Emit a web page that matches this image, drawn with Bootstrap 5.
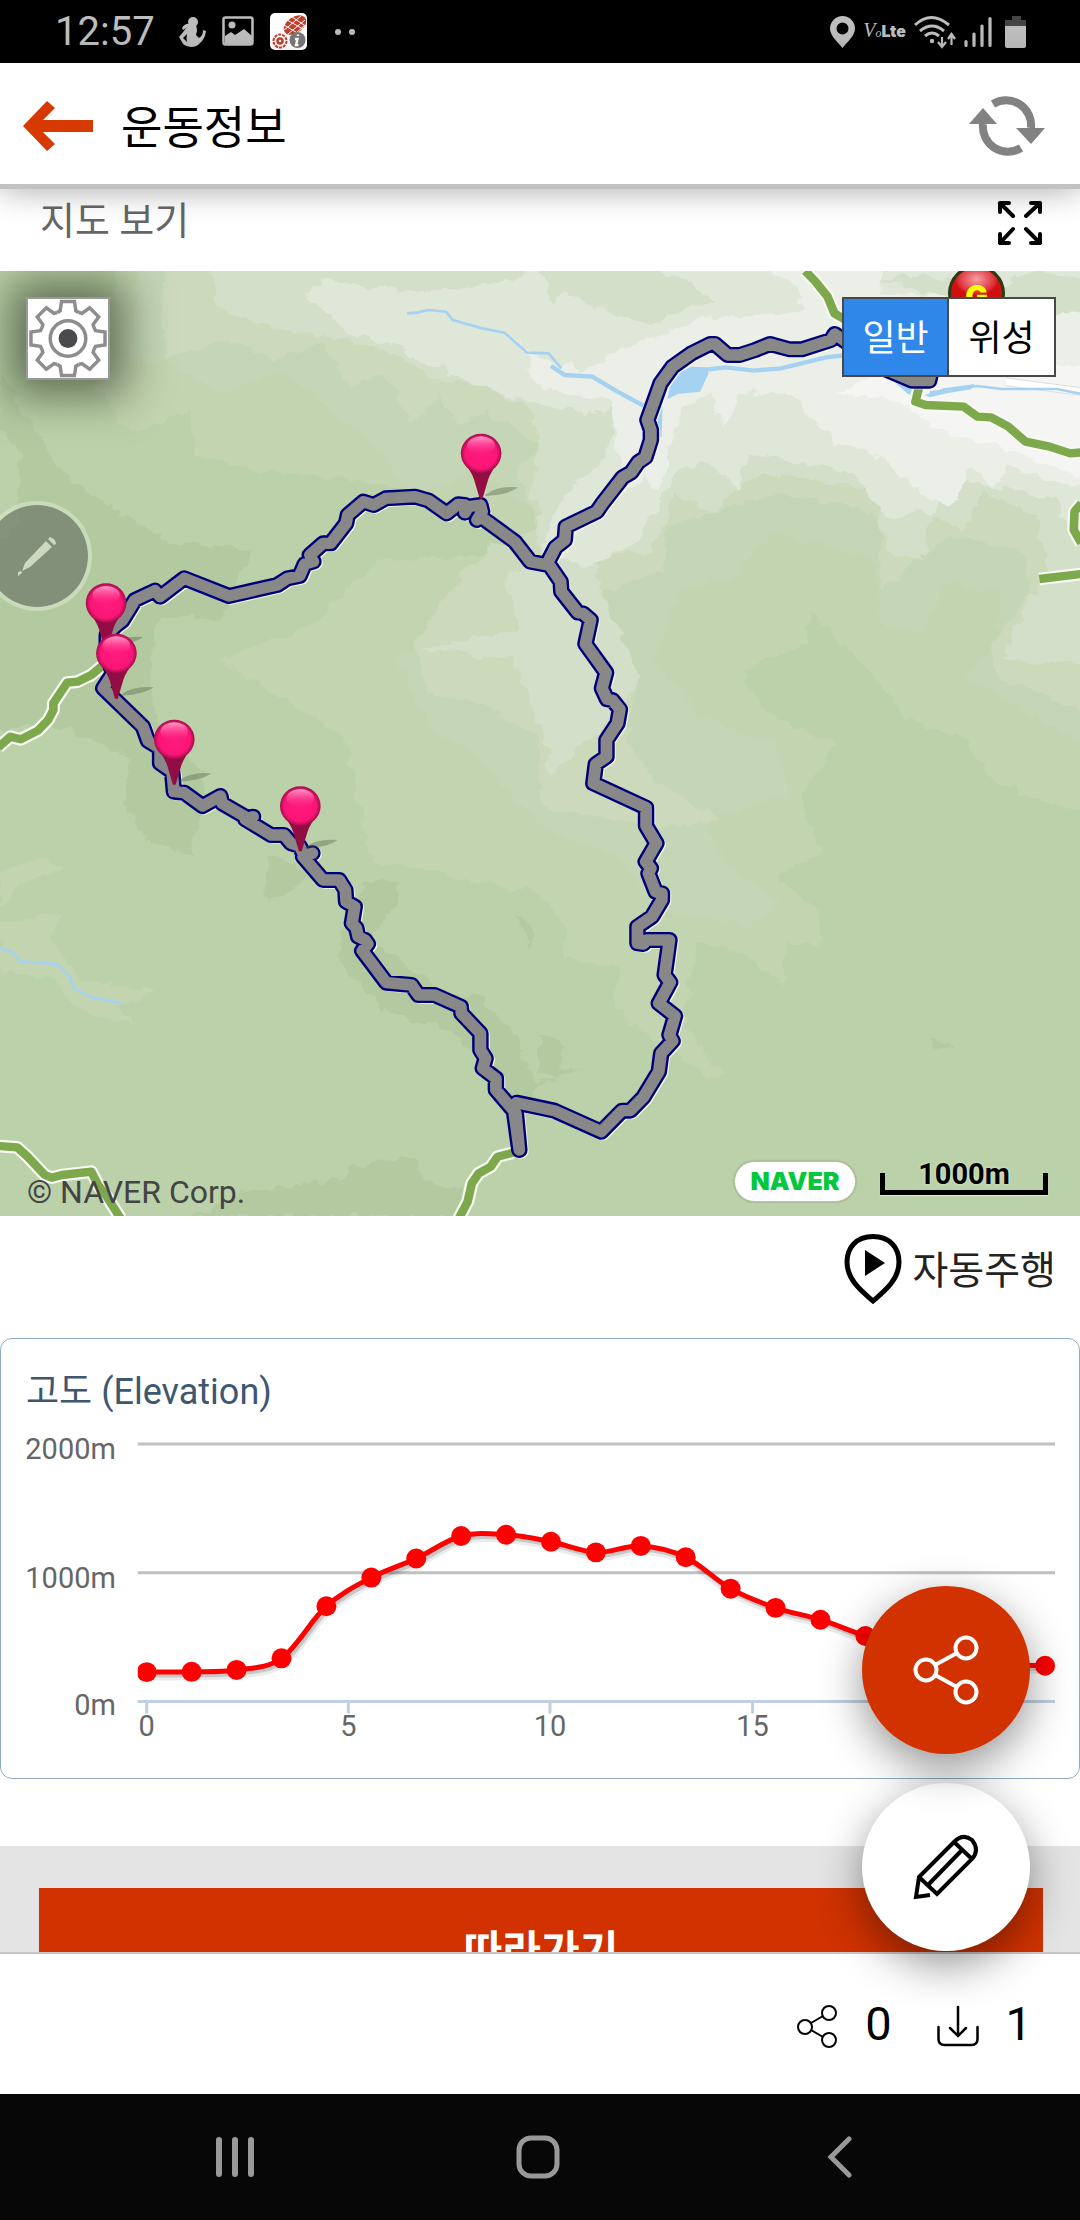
<!DOCTYPE html>
<html lang="ko">
<head>
<meta charset="utf-8">
<meta name="viewport" content="width=device-width, initial-scale=1">
<title>운동정보</title>
<link href="https://cdn.jsdelivr.net/npm/bootstrap@5.3.0/dist/css/bootstrap.min.css" rel="stylesheet">
<style>
  body { font-family: Roboto, "Noto Sans CJK KR", sans-serif; color: #000; background: #fff; }
  svg { display: block; flex: none; }
  .app-shell { height: 100vh; }
  .status-bar { height: 63px; padding: 0 52px 0 55px; background: #000; color: #bdbdbd; }
  .status-time { font-size: 40px; line-height: 40px; }
  .volte-mark { font: italic 20px/32px "Liberation Serif", serif; }
  .volte-mark small { font-size: 12px; }
  .volte-mark b { font: 900 16px/32px Inter, sans-serif; }
  .top-bar { height: 126px; padding: 4px 34px 0 22px; background: #fff; border-bottom: 5px solid #c2c2c2; box-shadow: 0 2px 30px rgba(0,0,0,.32); z-index: 5; }
  .top-title { font-size: 45px; line-height: 60px; margin-left: 27px; padding-top: 6px; }
  .plain-btn { padding: 0; border: 0; background: none; color: inherit; }
  .scroll-area { overflow-y: auto; scrollbar-width: none; }
  .map-head { height: 82px; padding: 0 37px 18px 40px; color: #666; font-size: 38px; line-height: 50px; }
  .map-head h2 { font-size: inherit; line-height: inherit; }
  .map-view { height: 945px; overflow: hidden; background: #bbd1a9; }
  .map-view > svg { width: 100%; height: 100%; }
  .gear-btn { left: 26px; top: 26px; width: 84px; height: 83px; background: #fff; border: 2px solid #999; box-shadow: 0 0 44px 16px rgba(20,30,10,.55); }
  .draw-btn { left: -18px; top: 230px; width: 110px; height: 110px; border-radius: 50%; background: rgba(90,97,90,.55); background-clip: padding-box; border: 4px solid rgba(225,235,215,.5); }
  .goal-ball { right: 75px; top: -6px; width: 57px; height: 57px; border-radius: 50%; border: 3px solid #2a3a12; background: radial-gradient(ellipse 22px 16px at 50% 22%, #f3a0a4, #e0353c 80%, transparent), #cf1010; color: #ff0; font: 900 30px/56px Inter, sans-serif; text-align: center; }
  .kind-group { right: 24px; top: 26px; height: 80px; border: 2px solid #484848; background: #fff; font-size: 36px; line-height: 50px; }
  .kind-group button { width: 105px; padding-top: 4px; }
  .kind-on { background: #2f87ea; color: #fff; border-right: 2px solid #484848; }
  .map-foot { left: 27px; right: 32px; bottom: 7px; height: 56px; color: #444; font-size: 32px; line-height: 34px; }
  .naver-pill { width: 122px; height: 41px; margin-bottom: 7px; border-radius: 21px; background: #fff; border: 1px solid #b4c3a6; box-shadow: 0 0 2px rgba(0,0,0,.3); color: #03c73c; font: 900 25px/39px Inter, sans-serif; }
  .scale-bar { width: 168px; margin-bottom: 14px; color: #000; font-weight: 700; font-size: 29px; line-height: 28px; text-shadow: 0 0 3px #e6efdc; }
  .scale-line { height: 22px; margin-top: -15px; border: 5px solid #000; border-top: 0; box-shadow: 0 1px 1px #dce8d0; }
  .drive-row { height: 122px; padding: 0 24px 12px; font-size: 39px; line-height: 54px; color: #222; }
  .elev-card { height: 441px; border: 1px solid #8facc6; border-radius: 12px; padding-top: 28px; }
  .elev-title { font-size: 36px; line-height: 50px; color: #3e576f; padding-left: 25px; }
  .elev-card > svg { width: 100%; height: auto; }
  .axis-text { font: 29px Roboto, sans-serif; fill: #666; }
  .follow-area { margin-top: 67px; padding: 42px 37px 60px 39px; background: #e4e4e4; }
  .follow-btn { height: 128px; border: 0; border-radius: 0; background: #d13200; color: #fff; font-size: 42px; font-weight: 700; line-height: 60px; }
  .fab-stack { right: 50px; bottom: 1px; gap: 29px; }
  .fab-round { width: 168px; height: 168px; border-radius: 50%; background: #fff; box-shadow: 0 14px 44px rgba(0,0,0,.42); }
  .fab-main { background: #d13200; z-index: 1; }
  .count-bar { height: 142px; padding: 0 48px; gap: 45px; border-top: 2px solid #c8c8c8; font-size: 47px; line-height: 50px; }
  .count-item { gap: 27px; }
  .nav-keys { height: 126px; padding: 0 220px 0 215px; background: #070707; }
</style>
</head>
<body>
<div class="app-shell d-flex flex-column">

  <div class="status-bar d-flex align-items-center flex-shrink-0">
    <span class="status-time">12:57</span>
    <svg class="ms-4" width="27" height="31" viewBox="0 0 27 31" fill="#bdbdbd"><circle cx="14" cy="6" r="5"/><path d="M11 9h6q1 3 1 6l-1 4 3 3q4-2 4-8l3 1q-1 8-6 12-3 4-9 4-8-1-9-5l-3-5 5-6q2-4 6-6zm-3 9l-4 4 4 4q-1-4 0-8z" fill-rule="evenodd"/><path d="M3 12q3-5 8-4v3q-4 0-7 3z"/></svg>
    <svg class="ms-3" width="32" height="31" viewBox="0 0 32 31"><rect x="1.500" y="1.500" width="29" height="27" rx="2" fill="none" stroke="#bdbdbd" stroke-width="2.500"/><circle cx="10" cy="9" r="3.500" fill="#bdbdbd"/><path d="M3 20l6-4 4 3 9-6 8 7v8H3z" fill="#bdbdbd"/></svg>
    <svg class="ms-3" width="37" height="37" viewBox="0 0 37 37"><rect width="37" height="37" rx="5" fill="#fff"/><ellipse cx="25" cy="12" rx="12.500" ry="8" transform="rotate(-35 25 12)" fill="#c43e2c"/><path d="M14 12l15 9M17 7l16 9M22 4l12 8M13 18L31 3M18 21L35 7M25 21l10-9" stroke="#fff" stroke-width="1"/><circle cx="10" cy="28" r="6.500" fill="none" stroke="#c43e2c" stroke-width="2" stroke-dasharray="3 1"/><circle cx="10" cy="28" r="2.500" fill="none" stroke="#c43e2c" stroke-width="2.500"/><circle cx="27.500" cy="27" r="8" fill="#777"/><path d="M28 21.500v1.500M25 26h2.500l-1.500 6h2.500" stroke="#fff" stroke-width="2.400" fill="none"/></svg>
    <svg class="ms-4" width="32" height="8" viewBox="0 0 32 8" fill="#bdbdbd"><circle cx="7" cy="4" r="3"/><circle cx="21" cy="4" r="3"/></svg>
    <div class="d-flex align-items-center ms-auto">
      <svg width="25" height="32" viewBox="0 0 25 32"><path fill="#bdbdbd" fill-rule="evenodd" d="M12.500 0A12.500 12.500 0 0 0 0 12.500C0 20 8 26 12.500 32 17 26 25 20 25 12.500A12.500 12.500 0 0 0 12.500 0zm0 6.500a6 6 0 1 1 0 12 6 6 0 0 1 0-12z"/></svg>
      <span class="volte-mark ms-2">V<small>o</small><b>Lte</b></span>
      <svg class="ms-2" width="42" height="34" viewBox="0 0 42 34" fill="none" stroke="#bdbdbd" stroke-width="3"><path d="M1 10q16-15 34 0M6 16q12-10 24 0M11 21q7-6 14 0"/><circle cx="18" cy="26" r="2.200" fill="#bdbdbd" stroke="none"/><path stroke-width="2.200" d="M28 22v9M24 27l4 5 4-5M37.500 30v-10M34 24l3.500-5 3.500 5"/></svg>
      <svg class="ms-2" width="28" height="32" viewBox="0 0 28 32" stroke="#bdbdbd" stroke-width="3.200" stroke-linecap="round"><path d="M2 25.500v4M10 18v11.500M18 10v19.500M26 2.500v27"/></svg>
      <svg class="ms-2" width="28" height="34" viewBox="0 0 28 34"><path fill="#444" d="M12 1h9v4h5v6H5V5h7z"/><path fill="#bdbdbd" d="M5 11h21v20q0 2-2 2H7q-2 0-2-2z"/></svg>
    </div>
  </div>

  <header class="top-bar d-flex align-items-center flex-shrink-0 position-relative">
    <button class="plain-btn" aria-label="뒤로"><svg width="72" height="52" viewBox="0 0 72 52"><path fill="#d63a00" d="M1 26L25 1l8 7-12 12h50v12H21l12 12-8 7z"/></svg></button>
    <h1 class="top-title fw-normal mb-0">운동정보</h1>
    <button class="plain-btn ms-auto" aria-label="새로고침"><svg width="78" height="62" viewBox="0 0 78 62"><path d="M25 9A25 25 0 0 1 63 33M53 53A25 25 0 0 1 15 29" fill="none" stroke="#828282" stroke-width="8"/><path fill="#828282" d="M48 33h29L63 49zM1 29L15 13l14 16z"/></svg></button>
  </header>

  <div class="position-relative flex-grow-1 d-flex flex-column" style="min-height:0">
    <main class="scroll-area flex-grow-1">
      <div class="map-head d-flex align-items-center justify-content-between">
        <h2 class="fw-normal mb-0">지도 보기</h2>
        <button class="plain-btn mt-1" aria-label="전체 화면"><svg width="46" height="46" viewBox="0 0 46 46" fill="none" stroke="#000" stroke-width="4" stroke-linecap="round" stroke-linejoin="round"><path d="M3 12V3h9M3 3l13 13M34 3h9v9M43 3L29 16M3 34v9h9M3 43l13-14M34 43h9v-9M43 43L29 29"/></svg></button>
      </div>

      <section class="map-view position-relative" aria-label="경로 지도">
        <svg viewBox="0 33 3136 2835" preserveAspectRatio="none">
          <defs>
            <filter id="rough" x="0" y="0" width="100%" height="100%"><feTurbulence type="fractalNoise" baseFrequency=".022" numOctaves="3" seed="4"/><feDisplacementMap in="SourceGraphic" scale="44" xChannelSelector="R" yChannelSelector="G"/></filter>
            <radialGradient id="ball" cx=".5" cy=".5" r=".5"><stop offset="0" stop-color="#ff1a80"/><stop offset=".78" stop-color="#fb1576"/><stop offset="1" stop-color="#a50d4c"/></radialGradient>
            <linearGradient id="shine" x1="0" y1="0" x2="0" y2="1"><stop offset="0" stop-color="#ff9cc8"/><stop offset="1" stop-color="#ff2a88" stop-opacity="0"/></linearGradient>
            <g id="pin"><path d="M12-8Q50-36 108-30Q84-10 14-4z" fill="#45553a" opacity=".35"/><path d="M-50-104Q-28-78-20-52L-4 4L4 4L20-52Q28-78 50-104z" fill="#930d45"/><circle cy="-132" r="59" fill="url(#ball)"/><ellipse cy="-155" rx="40" ry="28" fill="url(#shine)"/></g>
            <path id="route" d="M2575 330L2648 362L2698 362L2705 330M2460 248L2424 222L2413 240L2328 268L2293 268L2236 252L2193 270L2148 285L2113 285L2076 252L2062 252L2008 280L1953 320L1918 370L1880 480L1890 510L1890 540L1874 592L1853 607L1833 637L1808 652L1748 732L1733 755L1643 800L1640 840L1613 862L1590 908L1628 965L1630 995L1678 1058L1693 1060L1715 1080L1700 1152L1760 1238L1748 1285L1763 1318L1778 1320L1800 1348L1793 1390L1761 1440V1490L1730 1512L1723 1570L1876 1643V1698L1906 1750L1875 1805L1890 1825L1883 1840L1904 1896L1922 1900V1920L1893 1970L1851 2000V2050L1868 2052L1878 2040H1944L1930 2145L1946 2167L1913 2230L1960 2268L1944 2325L1953 2343L1920 2380L1913 2435L1868 2512L1830 2552H1806L1746 2615L1610 2552L1500 2528L1492 2550L1508 2670L1498 2560L1440 2490V2455L1402 2425L1410 2395L1395 2370V2320L1340 2260L1338 2240L1262 2205H1215L1195 2175L1122 2168L1052 2072L1068 2052L1060 2040L1040 2030L1035 2005L1022 1990L1030 1940L1005 1925L1003 1890L985 1860H938L880 1790L907 1780L882 1785L870 1758L845 1750L825 1725H787L712 1678L735 1670L720 1675L645 1630L640 1608L588 1638L535 1598L505 1595L500 1535L465 1510V1465L430 1443L415 1400L300 1285L328 1240L310 1180V1125L335 1098L355 1082L392 1020L450 992L465 1010L535 955L665 1008L805 975L835 955L870 948L885 912L910 905L900 885L938 850H960L1005 790L1010 765L1055 725L1085 735L1120 715L1205 710L1245 722L1297 760L1330 733L1350 735V758L1360 740L1395 735L1400 755L1385 780L1398 772L1495 845L1540 905L1590 915"/>
            <path id="roads" d="M2338 33L2368 65L2403 110L2423 160L2480 195M2668 385L2658 425L2688 435L2798 440L2838 470L2878 472L2928 500L2978 545L3048 560L3108 580L3140 577M3140 730L3120 755L3118 810L3140 850M3018 957L3140 942M300 1215L265 1245L225 1265L195 1268L155 1330V1350L140 1380L110 1412L60 1438L30 1430L-5 1462M-5 2658L50 2662L80 2690L130 2745L150 2753L180 2745L265 2735L285 2775L310 2810L350 2875M1490 2678L1445 2690L1425 2720L1390 2740L1370 2770L1358 2825L1330 2880"/>
          </defs>
          <g filter="url(#rough)">
            <path fill="#bbd1a9" d="M-100-60h3336v3000H-100z"/>
            <g fill="#b3caa1">
              <path d="M0 330L60 440L150 590L210 660L350 760L480 840L740 870L700 940L640 1080L460 1060L440 1180L430 1330L600 1560L560 1790L440 1750L360 1640L380 1500L290 1440L120 1390L0 1410L-60 900L50 780L60 600L0 500z"/>
              <path d="M560 2868L740 2790L980 2760L1030 2720L1200 2690L1240 2770L1360 2800L1350 2868zM1060 1860L1170 1870L1130 1960L1080 2040L1240 2160L1280 2210L1380 2200L1500 2330L1560 2470L1620 2440L1480 2560L1400 2400L1290 2300L1130 2260L980 2100L990 2050zM1568 2315L1640 2360L1620 2420L1700 2440L1568 2440z"/>
              <path d="M780 1780L900 1840L850 1900L770 1920zM2700 2335L2775 2360L2705 2370zM1500 1970L1550 2010L1545 2070zM1230 1590L1260 1630L1240 1640z"/>
            </g>
            <path fill="#c3d4b0" d="M360-40L280 380L380 520L560 450L555 590L800 640L1050 660L1300 720L1500 860L1380 880L1100 900L900 1100L640 1200L800 1300L1000 1440L1080 1800L1300 1850L1568 1900L1640 2000V2100L1800 2120L1790 2250L2050 2450L2100 2440L1990 2300L2000 2150L2020 2050L2130 2060L2280 2180V2050L2380 2060V1950L2250 1850L2380 1780L2330 1600L2430 1450L2250 1380L2150 1240L2340 1150L2350 1050L2500 1200L2640 1380L2800 1440L2880 1560L3236 1700V-40z"/>
            <path fill="#c3d4b0" d="M0 1830L110 1800L190 1820L60 1870L0 1940zM0 1990L180 1960L150 2040L230 2160L470 2200L330 2240L400 2290L240 2260L150 2160L0 2130z"/>
            <path fill="#c5d6b7" d="M400-40L380 300L480 300L650 400L820 330L930 420L1080 560L1200 700L1400 640L1568 760L1500 950L1150 1200L1250 1400L1400 1500L1568 1700L1800 1800L1900 1950L2180 2000L2270 1940L2100 1800L2050 1680L2300 1600L2250 1450L2050 1380L1900 1200L1980 980L2120 960L2240 820L2540 900L2560 1100L2680 1120L2740 960L2900 1000L2900 1150L2800 1250L3236 1500V-40z"/>
            <path fill="#ccdabb" d="M470-40L480 300L650 240L810 300L930 250L1020 380L1110 340L1200 490L1280 400L1330 500L1420 450L1568 560L1500 640L1568 800L1420 860L1300 1000L1200 1150L1240 1300L1400 1330L1568 1440V1640L1900 1700L2090 1680L1900 1560L1820 1440L1850 1300L1730 1200L1750 1000L1930 930L1930 800L2250 700L2480 740L2560 780V1000L2660 900L2750 820L2960 870L3000 1000L2880 1150L2900 1250L3236 1400V-40z"/>
            <path fill="#d3dfc8" d="M600-40L630 140L800 210L1020 240L1190 300L1240 350L1390 380L1540 440L1568 560L1560 700L1568 900L1460 960L1480 1020L1510 1110L1220 1160L1490 1200L1580 1420L1600 1560L1700 1440L1780 1380L1860 1250L1820 1150L1740 1010L1720 900L1900 870L1960 700L2080 750L2200 640L2540 690L2580 880L2680 900L2700 760L2800 820L2850 700L3000 760L3040 930L2950 1100L2910 1200L3236 1220V-40z"/>
            <path fill="#dfe8d8" d="M950 60L880 100L1020 220L1190 280L1380 380L1568 430L1700 460L1790 440L1760 600L1640 700L1568 880L1700 920L1850 850L1960 650L2040 600L2150 690L2170 580L2300 600L2480 640L2580 780L2700 750L2790 660L2930 690L3060 720L3136 860L3236 700V-40H1560L1500 60L1400 80L1200 95z"/>
            <path fill="#ecefe8" d="M2100-40L2320 80V160L2060 170L1800 270L1700 330L1568 300L1500 240L1568 380L1780 430L1790 520L1800 660L1620 900L1650 820L1880 640L1910 700L1980 440L2070 400L2100 500L2150 400L2290 400L2430 550L2570 600L2700 720L2770 730L2820 610L2890 680L2930 620L3060 660L3236 700V100L2900 120L2560 100V-40z"/>
            <path fill="#f5f6f4" d="M2440 400L2600 420L2700 500L2900 560L3050 620L3236 680V310L2900 330L2600 300z"/>
            <path fill="#d3dfc8" d="M1600 130L1640 95L1700 130L1890 200L1980 140L2080 130L1980 60L1860 0H1560zM1568 480L1680 500L1780 530L1640 620L1680 680L1600 720H1540zM2560 60L2680 40L2850 100L3000 30L3236 80V170L2900 160z"/>
          </g>
          <path fill="none" stroke="#ddd" stroke-width="26" d="M2920 365L3140 395"/><path fill="none" stroke="#fff" stroke-width="20" d="M2920 365L3140 395"/>
          <path fill="#a6d2f2" d="M1953 345L2008 320L2048 322L2058 340L2033 395L1968 402L1938 418zM2600 370L2660 385L2640 405zM2685 405L2740 385L2830 372L2820 388L2750 400L2700 412z"/>
          <g fill="none" stroke="#a6d2f2"><path stroke-width="13" d="M2040 330L2108 322L2188 332L2268 325L2398 292L2460 285M1600 318L1640 345L1720 350L1788 392L1868 437M1918 410L1915 530"/><path stroke-width="8" d="M1182 160L1210 158L1245 150L1295 155L1315 180L1400 205L1465 218L1530 278L1593 280L1630 325M2700 398L2838 378L2908 387H3068L3140 402M0 2065L35 2075L60 2105L165 2112L200 2145L215 2185L265 2212L355 2230"/></g>
          <g fill="none" stroke-linejoin="round">
            <use href="#roads" stroke="#f7f9f2" stroke-width="38"/><use href="#roads" stroke="#7da94c" stroke-width="25"/>
            <g stroke-linecap="round"><use href="#route" x="5" y="4" stroke="#f7f9f2" stroke-width="44"/><use href="#route" stroke="#00007c" stroke-width="48"/><use href="#route" stroke="#888" stroke-width="34"/></g>
          </g>
          <use href="#pin" x="1397" y="712"/><use href="#pin" x="308" y="1161"/><use href="#pin" x="338" y="1312"/><use href="#pin" x="506" y="1570"/><use href="#pin" x="872" y="1770"/>
        </svg>
        <button class="gear-btn position-absolute p-0" aria-label="설정">
          <svg width="80" height="79" viewBox="0 0 80 80"><defs><path id="tooth" d="M-10.900-26.300L-8-28L-6.500-37.500H6.500L8-28L10.900-26.300"/></defs><g transform="translate(40 40)" fill="none" stroke="#8d8d90" stroke-width="3.500"><use href="#tooth"/><use href="#tooth" transform="rotate(45)"/><use href="#tooth" transform="rotate(90)"/><use href="#tooth" transform="rotate(135)"/><use href="#tooth" transform="rotate(180)"/><use href="#tooth" transform="rotate(225)"/><use href="#tooth" transform="rotate(270)"/><use href="#tooth" transform="rotate(315)"/><circle r="18"/><circle r="9.500" fill="#4b4b4d" stroke="none"/></g></svg>
        </button>
        <button class="draw-btn position-absolute p-0 d-flex align-items-center justify-content-center" aria-label="그리기"><svg width="40" height="40" viewBox="0 0 40 40" fill="#cdd8c0"><path d="M29 5l6 6-22 20-8 4 3-8zM31 3l2-2q6 2 6 7l-2 1zM1 36l3-1 1 2-4 3z"/></svg></button>
        <div class="goal-ball position-absolute">G</div>
        <div class="kind-group position-absolute d-flex" role="group" aria-label="지도 종류">
          <button class="plain-btn kind-on">일반</button><button class="plain-btn">위성</button>
        </div>
        <div class="map-foot position-absolute d-flex align-items-end">
          <span class="me-auto">© NAVER Corp.</span>
          <a href="#" class="naver-pill text-decoration-none text-center me-4">NAVER</a>
          <div class="scale-bar text-center">1000m<div class="scale-line"></div></div>
        </div>
      </section>

      <div class="drive-row d-flex align-items-center justify-content-end">
        <button class="plain-btn d-flex align-items-center gap-2"><svg class="mb-1" width="62" height="72" viewBox="0 0 62 72"><path d="M31 3.500C14 3.500 5 15 5 29 5 48 22 60 31 68 40 60 57 48 57 29 57 15 48 3.500 31 3.500z" fill="none" stroke="#000" stroke-width="5"/><path d="M23 17l20 13-20 13z"/></svg><span>자동주행</span></button>
      </div>

      <section class="elev-card">
        <h2 class="elev-title fw-normal mb-0">고도 (Elevation)</h2>
        <svg viewBox="0 1417 1080 335" role="img" aria-label="고도 그래프">
          <path d="M137 1444H1056M137 1573H1056" stroke="#c0c0c0" stroke-width="3"/>
          <path d="M137 1702H1056M146 1702v12M348 1702v12M550 1702v12M753 1702v12M955 1702v12" stroke="#c0d0e0" stroke-width="3"/>
          <g class="axis-text" text-anchor="end"><text x="115" y="1459">2000m</text><text x="115" y="1588">1000m</text><text x="115" y="1716">0m</text></g>
          <g class="axis-text" text-anchor="middle"><text x="146" y="1737">0</text><text x="348" y="1737">5</text><text x="550" y="1737">10</text><text x="753" y="1737">15</text></g>
          <svg x="137" y="1430" width="919" height="290" viewBox="137 1430 919 290">
            <defs><path id="curve" fill="none"/></defs>
            <use href="#curve" stroke="#000" stroke-opacity=".08" stroke-width="9" x="2" y="4"/>
            <use href="#curve" stroke="#000" stroke-opacity=".15" stroke-width="5" x="2" y="3"/>
            <use href="#curve" stroke="#f00" stroke-width="5"/>
            <g id="dots" fill="#f00"></g>
          </svg>
        </svg>
      </section>

      <div class="follow-area"><button class="follow-btn btn w-100">따라가기</button></div>
    </main>

    <div class="fab-stack position-absolute d-flex flex-column">
      <button class="plain-btn fab-round fab-main position-relative d-flex align-items-center justify-content-center" aria-label="공유"><svg width="66" height="70" viewBox="0 0 66 70" fill="none" stroke="#fff" stroke-width="4"><circle cx="13" cy="35" r="10.500"/><circle cx="53" cy="13" r="10.500"/><circle cx="53" cy="57" r="10.500"/><path d="M22 30l22-12M22 40l22 12"/></svg></button>
      <button class="plain-btn fab-round d-flex align-items-center justify-content-center" aria-label="편집"><svg width="66" height="66" viewBox="0 0 66 66" fill="none" stroke="#000" stroke-width="4"><path d="M17 61L3 63 6 43 41 8Q50-1 59 6 67 16 59 25L24 60 6 43M41 8l18 17M49 16L15 51"/></svg></button>
    </div>
  </div>

  <footer class="count-bar d-flex align-items-center justify-content-end flex-shrink-0 bg-white">
    <div class="count-item d-flex align-items-center"><svg class="mt-1" width="42" height="44" viewBox="0 0 42 44" fill="none" stroke="#000" stroke-width="2"><circle cx="9" cy="23" r="7"/><circle cx="33" cy="9" r="7"/><circle cx="33" cy="36" r="7"/><path d="M15 19l12-7M15 26l12 7"/></svg><span>0</span></div>
    <div class="count-item d-flex align-items-center"><svg class="mt-1" width="42" height="42" viewBox="0 0 42 42" fill="none" stroke="#000" stroke-width="2.500" stroke-linecap="round"><path d="M1.500 22v12q0 6 6 6h27q6 0 6-6V22M21 2v29M13 23l8 8 8-8"/></svg><span>1</span></div>
  </footer>

  <nav class="nav-keys d-flex align-items-center justify-content-between flex-shrink-0" aria-label="시스템">
    <button class="plain-btn" aria-label="최근 앱"><svg width="40" height="42" viewBox="0 0 40 42" stroke="#999" stroke-width="6" stroke-linecap="round"><path d="M4 4v34M20 4v34M36 4v34"/></svg></button>
    <button class="plain-btn" aria-label="홈"><svg width="44" height="44" viewBox="0 0 44 44"><rect x="3" y="3" width="38" height="38" rx="12" fill="none" stroke="#999" stroke-width="5"/></svg></button>
    <button class="plain-btn" aria-label="이전"><svg width="40" height="42" viewBox="0 0 40 42" fill="none" stroke="#999" stroke-width="5" stroke-linecap="round"><path d="M29 3L11 21l18 18"/></svg></button>
  </nav>
</div>
<script src="https://cdn.jsdelivr.net/npm/bootstrap@5.3.0/dist/js/bootstrap.bundle.min.js"></script>
<script>
  // Elevation in metres, sampled at equal distances along the course
  const metres = [228, 230, 245, 335, 740, 962, 1110, 1285, 1295, 1240, 1158, 1208, 1120, 876, 727, 635, 508, 400, 325, 290, 277];
  const pts = metres.map((m, i) => [146 + i * 45, 1702 - m * 0.129]);
  const at = i => pts[Math.max(0, Math.min(pts.length - 1, i))];
  let d = 'M' + pts[0];
  for (let i = 0; i < pts.length - 1; i++) {
    const [a, b, c, e] = [at(i - 1), at(i), at(i + 1), at(i + 2)];
    d += ` C${b[0] + (c[0] - a[0]) / 6},${b[1] + (c[1] - a[1]) / 6} ${c[0] - (e[0] - b[0]) / 6},${c[1] - (e[1] - b[1]) / 6} ${c}`;
  }
  document.getElementById('curve').setAttribute('d', d);
  document.getElementById('dots').innerHTML = pts.map(p => `<circle cx="${p[0]}" cy="${p[1]}" r="10"/>`).join('');
</script>
</body>
</html>
